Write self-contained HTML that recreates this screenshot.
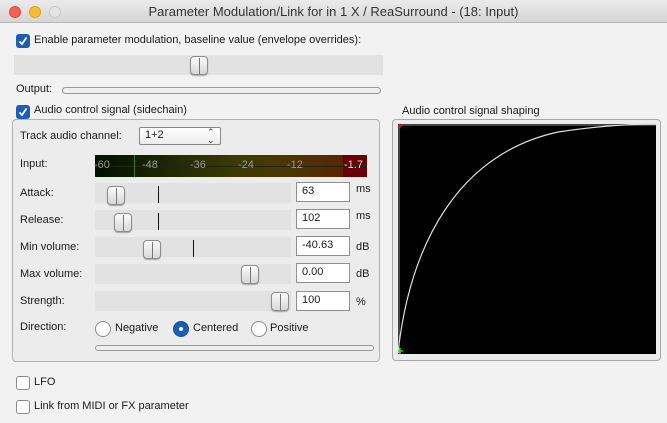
<!DOCTYPE html>
<html><head><style>
*{box-sizing:border-box;margin:0;padding:0}
body{width:667px;height:423px;overflow:hidden;background:#f2f2f2;font-family:"Liberation Sans",sans-serif;font-size:11px;line-height:15px;color:#1a1a1a;position:relative}
.a{position:absolute}
.tb{left:0;top:0;width:667px;height:23px;background:linear-gradient(#ebebeb,#d6d6d6);border-bottom:1px solid #b8b8b8;text-align:center;font-size:13px;line-height:23px;color:#333}
.dot{width:12px;height:12px;border-radius:50%;top:6px}
.cb{width:14px;height:14px;border-radius:3px;background:#1a5fb4;}
.cb svg{position:absolute;left:1px;top:1px}
.ucb{width:14px;height:14px;border-radius:3px;background:#fff;border:1px solid #8a8a8a}
.trk{background:#e2e2e2}
.th{width:18px;height:19px;border:1px solid #8d8d8d;border-radius:4px;background:linear-gradient(#fbfbfb,#d8d8d8);box-shadow:0 1px 1px rgba(0,0,0,.3)}
.th:after{content:"";position:absolute;left:8px;top:1px;width:1px;height:16px;background:#777}
.inp{width:54px;height:20px;background:#fff;border:1px solid #8e8e8e;padding:1px 5px;font-size:11px}
.rt{border:1px solid #999;border-radius:4px;height:7px;background:#efefef}
.rad{width:16px;height:16px;border-radius:50%;border:1px solid #8a8a8a;background:#fff}
.ml{color:#999;font-size:11px;top:158px}
</style></head><body>
<div class="a tb">Parameter Modulation/Link for in 1 X / ReaSurround - (18: Input)</div>
<div class="a dot" style="left:9px;background:#fc5f57;border:1px solid #de4a42"></div>
<div class="a dot" style="left:29px;background:#fdbc2e;border:1px solid #dea023"></div>
<div class="a dot" style="left:49px;background:#e5e5e5;border:1px solid #c8c8c8"></div>

<div class="a cb" style="left:16px;top:34px"><svg width="12" height="12"><path d="M2.5 6.5 L5 9 L9.5 2.5" stroke="#fff" stroke-width="1.8" fill="none"/></svg></div>
<div class="a" style="left:34px;top:33px">Enable parameter modulation, baseline value (envelope overrides):</div>
<div class="a trk" style="left:14px;top:55px;width:369px;height:20px"></div>
<div class="a th" style="left:190px;top:56px"></div>
<div class="a" style="left:16px;top:82px">Output:</div>
<div class="a rt" style="left:62px;top:87px;width:319px"></div>

<div class="a cb" style="left:16px;top:105px"><svg width="12" height="12"><path d="M2.5 6.5 L5 9 L9.5 2.5" stroke="#fff" stroke-width="1.8" fill="none"/></svg></div>
<div class="a" style="left:34px;top:103px">Audio control signal (sidechain)</div>
<div class="a" style="left:12px;top:119px;width:368px;height:243px;border:1px solid #b3b3b3;border-radius:4px;background:#ececec"></div>

<div class="a" style="left:20px;top:129px">Track audio channel:</div>
<div class="a" style="left:139px;top:127px;width:82px;height:18px;border:1px solid #888;border-radius:2px;background:linear-gradient(#fff,#ececec);padding:0 5px">1+2</div>
<div class="a" style="left:207px;top:128px;font-size:9px;line-height:8px;color:#333">&#8963;<br>&#8964;</div>

<div class="a" style="left:20px;top:157px">Input:</div>
<div class="a" style="left:95px;top:155px;width:272px;height:22px;background:linear-gradient(90deg,#001200 0%,#152200 20%,#3a3a00 50%,#4a3800 70%,#582600 90%)"></div>
<div class="a" style="left:343px;top:155px;width:24px;height:22px;background:#6a0000"></div>
<div class="a" style="left:95px;top:166px;width:272px;height:1px;background:#222"></div>
<div class="a" style="left:134px;top:155px;width:1px;height:22px;background:#3c7a00"></div>
<div class="a ml" style="left:94px">-60</div>
<div class="a ml" style="left:142px">-48</div>
<div class="a ml" style="left:190px">-36</div>
<div class="a ml" style="left:238px">-24</div>
<div class="a ml" style="left:287px">-12</div>
<div class="a ml" style="left:344px;color:#ddd">-1.7</div>

<div class="a" style="left:20px;top:186px">Attack:</div>
<div class="a trk" style="left:95px;top:183px;width:196px;height:20px"></div>
<div class="a th" style="left:107px;top:186px"></div>
<div class="a" style="left:158px;top:186px;width:1px;height:17px;background:#111"></div>
<div class="a inp" style="left:296px;top:182px">63</div>
<div class="a" style="left:356px;top:182px">ms</div>

<div class="a" style="left:20px;top:213px">Release:</div>
<div class="a trk" style="left:95px;top:210px;width:196px;height:20px"></div>
<div class="a th" style="left:114px;top:213px"></div>
<div class="a" style="left:158px;top:213px;width:1px;height:17px;background:#111"></div>
<div class="a inp" style="left:296px;top:209px">102</div>
<div class="a" style="left:356px;top:209px">ms</div>

<div class="a" style="left:20px;top:240px">Min volume:</div>
<div class="a trk" style="left:95px;top:237px;width:196px;height:20px"></div>
<div class="a th" style="left:143px;top:240px"></div>
<div class="a" style="left:193px;top:240px;width:1px;height:17px;background:#111"></div>
<div class="a inp" style="left:296px;top:236px">-40.63</div>
<div class="a" style="left:356px;top:240px">dB</div>

<div class="a" style="left:20px;top:267px">Max volume:</div>
<div class="a trk" style="left:95px;top:264px;width:196px;height:20px"></div>
<div class="a th" style="left:241px;top:265px"></div>
<div class="a inp" style="left:296px;top:263px">0.00</div>
<div class="a" style="left:356px;top:267px">dB</div>

<div class="a" style="left:20px;top:294px">Strength:</div>
<div class="a trk" style="left:95px;top:291px;width:196px;height:20px"></div>
<div class="a th" style="left:271px;top:292px"></div>
<div class="a inp" style="left:296px;top:291px">100</div>
<div class="a" style="left:356px;top:295px">%</div>

<div class="a" style="left:20px;top:320px">Direction:</div>
<div class="a rad" style="left:95px;top:321px"></div>
<div class="a" style="left:115px;top:321px">Negative</div>
<div class="a rad" style="left:173px;top:321px;background:#1a5fb4;border-color:#15519b"></div>
<div class="a" style="left:179px;top:327px;width:4px;height:4px;border-radius:50%;background:#fff"></div>
<div class="a" style="left:193px;top:321px">Centered</div>
<div class="a rad" style="left:251px;top:321px"></div>
<div class="a" style="left:270px;top:321px">Positive</div>
<div class="a rt" style="left:95px;top:345px;width:279px;height:6px"></div>

<div class="a" style="left:402px;top:104px">Audio control signal shaping</div>
<div class="a" style="left:392px;top:119px;width:269px;height:242px;border:1px solid #a8a8a8;border-radius:4px;background:#ececec"></div>
<svg class="a" style="left:398px;top:124px" width="258" height="230">
<rect width="258" height="230" fill="#000"/>
<path d="M1 1 H258" stroke="#888" stroke-width="1"/>
<path d="M1 1 V229" stroke="#888" stroke-width="1"/>
<path d="M0 229 C12 120 60 30 160 8 C200 2 230 0 258 0" stroke="#ddd" stroke-width="1.2" fill="none"/>
<path d="M0 2 H4 M2 0 V4" stroke="#e00" stroke-width="1.3"/>
<path d="M0 227 H5 M2 224 V230" stroke="#0f0" stroke-width="1.3"/>
</svg>

<div class="a ucb" style="left:16px;top:376px"></div>
<div class="a" style="left:34px;top:375px">LFO</div>
<div class="a ucb" style="left:16px;top:400px"></div>
<div class="a" style="left:34px;top:399px">Link from MIDI or FX parameter</div>
</body></html>
